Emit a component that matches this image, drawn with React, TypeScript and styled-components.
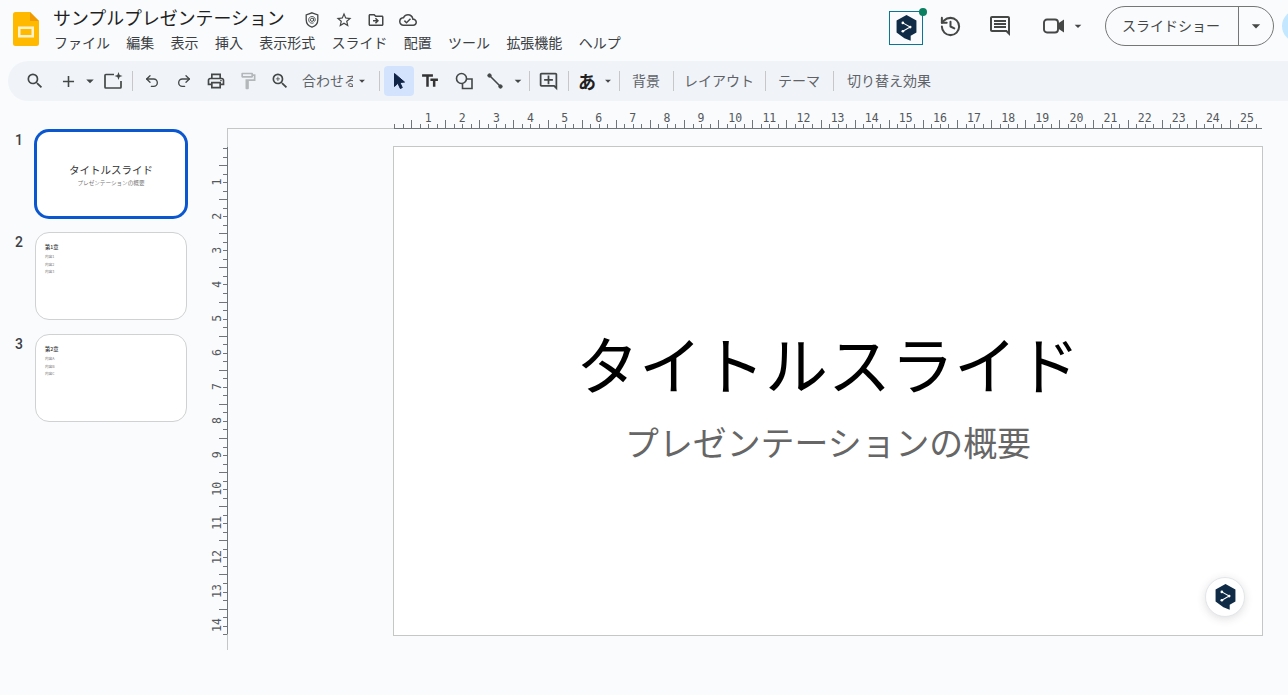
import React from "react";
import styled, { createGlobalStyle } from "styled-components";
import {
  MdOutlineStarBorder,
  MdOutlineComment,
  MdOutlineDriveFileMove,
  MdOutlineCloudDone,
  MdOutlineAddComment,
  MdOutlineTextFields,
  MdSearch,
  MdAdd,
  MdOutlinePrint,
  MdOutlineFormatPaint,
  MdOutlineZoomIn,
  MdArrowDropDown,
} from "react-icons/md";
import { Undo2, Redo2, History } from "lucide-react";

const JP = `"Noto Sans CJK JP", "Noto Sans", "Liberation Sans", sans-serif`;

const Global = createGlobalStyle`
  html, body { margin: 0; padding: 0; height: 100%; background: #f9fbfd; overflow: hidden; }
  body { font-family: ${JP}; }
  * { box-sizing: border-box; }
`;

const Page = styled.div`
  width: 1288px;
  height: 695px;
  overflow: hidden;
  background: #f9fbfd;
`;

const Header = styled.header`
  height: 61px;
  display: flex;
  justify-content: space-between;
  padding-left: 13px;
  overflow: hidden;
`;
const LeftGroup = styled.div`
  display: flex;
`;
const LogoWrap = styled.div`
  width: 26px;
  height: 34px;
  margin-top: 12px;
`;
const TitleBlock = styled.div`
  margin-left: 14px;
  padding-top: 5px;
`;
const TitleRow = styled.div`
  display: flex;
  align-items: center;
  height: 25px;
`;
const DocTitle = styled.div`
  font-size: 17.9px;
  line-height: 25px;
  color: #1f1f1f;
  width: 232px;
  white-space: nowrap;
`;
const TitleIcons = styled.div`
  display: flex;
  gap: 14px;
  margin-left: 18px;
  color: #444746;
  align-items: center;
  margin-top: 5px;
`;
const Menu = styled.nav`
  display: flex;
  gap: 16.3px;
  margin-top: 1px;
  margin-left: 1px;
  font-size: 14px;
  line-height: 22px;
  color: #3c4043;
  white-space: nowrap;
`;

const RightGroup = styled.div`
  display: flex;
  align-items: center;
  height: 52px;
  flex-shrink: 0;
  margin-right: -26px;
`;
const DeepLBox = styled.div`
  position: relative;
  width: 34px;
  height: 34px;
  margin-top: 4px;
  border: 1px solid #0b7596;
  display: flex;
  align-items: center;
  justify-content: center;
`;
const GreenDot = styled.span`
  position: absolute;
  right: -5px;
  top: -4px;
  width: 8px;
  height: 8px;
  border-radius: 50%;
  background: #0a8060;
`;
const HeadIcon = styled.div<{ $ml: number; $w?: number }>`
  margin-left: ${(p) => p.$ml}px;
  width: ${(p) => p.$w ?? 24}px;
  display: flex;
  align-items: center;
  justify-content: center;
  color: #444746;
`;
const SlideshowButton = styled.div`
  margin-left: 19px;
  width: 169px;
  height: 40px;
  border: 1px solid #747775;
  border-radius: 20px;
  display: flex;
  font-size: 14px;
  color: #444746;
`;
const SlideshowLabel = styled.div`
  width: 133px;
  border-right: 1px solid #747775;
  padding-left: 16px;
  line-height: 37px;
  white-space: nowrap;
`;
const SlideshowCaret = styled.div`
  flex: 1;
  display: flex;
  align-items: center;
  justify-content: center;
`;
const Avatar = styled.div`
  width: 32px;
  height: 32px;
  margin-left: 8px;
  border-radius: 50%;
  background: #c2e7ff;
`;

const Toolbar = styled.div`
  margin-left: 8px;
  height: 40px;
  padding-left: 12px;
  display: flex;
  align-items: center;
  background: #f0f4f9;
  border-radius: 20px 0 0 20px;
  color: #444746;
`;
const Tool = styled.div<{ $w?: number; $ml?: number; $active?: boolean }>`
  flex: none;
  width: ${(p) => p.$w ?? 30}px;
  height: 30px;
  margin-left: ${(p) => p.$ml ?? 0}px;
  display: flex;
  align-items: center;
  justify-content: center;
  border-radius: 4px;
  background: ${(p) => (p.$active ? "#d3e3fd" : "transparent")};
`;
const Sep = styled.div<{ $ml: number }>`
  flex: none;
  width: 1px;
  height: 20px;
  margin-left: ${(p) => p.$ml}px;
  background: #c7c7c7;
`;
const ToolText = styled.div<{ $ml: number; $w?: number }>`
  flex: none;
  margin-left: ${(p) => p.$ml}px;
  ${(p) => (p.$w ? `width: ${p.$w}px; overflow: hidden;` : "")}
  font-size: 14px;
  line-height: 20px;
  height: 22px;
  color: #5f6368;
  white-space: nowrap;
`;
const KanaTool = styled(Tool)`
  font-size: 18px;
  font-weight: 700;
  color: #1f1f1f;
`;

const Main = styled.main`
  display: grid;
  grid-template-columns: 212px 15px 1fr;
  grid-template-rows: 27px 522px;
`;
const Film = styled.aside`
  grid-column: 1;
  grid-row: 1 / 3;
  padding-top: 29px;
  display: flex;
  flex-direction: column;
  gap: 14px;
`;
const FilmItem = styled.div`
  display: flex;
`;
const FilmNum = styled.div`
  flex: none;
  width: 23px;
  text-align: right;
  font: 500 14px/20px Roboto, sans-serif;
  color: #3c4043;
`;
const Thumb = styled.div<{ $sel?: boolean; $center?: boolean }>`
  flex: none;
  width: 152px;
  height: 88px;
  margin-left: 12px;
  background: #fff;
  border-radius: 14px;
  border: ${(p) => (p.$sel ? "2px solid #0b57d0" : "1px solid #cfd1d2")};
  box-shadow: ${(p) => (p.$sel ? "0 0 0 1px #0b57d0" : "none")};
  display: flex;
  flex-direction: column;
  overflow: hidden;
  padding: ${(p) => (p.$center ? "31px 0 0" : "10px 0 0 9px")};
  align-items: ${(p) => (p.$center ? "center" : "flex-start")};
`;
const ThumbTitle = styled.div`
  font-size: 10.5px;
  line-height: 14px;
  color: #333;
  white-space: nowrap;
`;
const ThumbSub = styled.div`
  font-size: 5.6px;
  line-height: 9px;
  margin-top: 2px;
  color: #777;
  white-space: nowrap;
`;
const ThumbHead = styled.div`
  font-size: 5.2px;
  line-height: 7px;
  color: #333;
  font-weight: 500;
  margin-bottom: 3px;
`;
const ThumbLine = styled.div`
  font-size: 3.6px;
  line-height: 7.5px;
  color: #777;
`;

const HRulerSlot = styled.div`
  grid-column: 3;
  grid-row: 1;
  height: 18px;
  align-self: end;
  position: relative;
  z-index: 1;
`;
const VRulerSlot = styled.div`
  grid-column: 2;
  grid-row: 2;
  position: relative;
  z-index: 1;
`;
const RulerSvg = styled.svg`
  display: block;
  overflow: visible;
`;
const Canvas = styled.section`
  grid-column: 3;
  grid-row: 2;
  border-top: 1px solid #c4c7c5;
  border-left: 1px solid #c4c7c5;
  padding: 17px 0 0 165px;
  height: 522px;
  width: 1035px;
`;
const Slide = styled.div`
  position: relative;
  width: 870px;
  height: 490px;
  background: #fff;
  border: 1px solid #c4c7c5;
  display: flex;
  flex-direction: column;
  align-items: center;
  padding-top: 170px;
`;
const SlideTitle = styled.div`
  font-size: 63px;
  line-height: 90px;
  color: #000;
  white-space: nowrap;
`;
const SlideSub = styled.div`
  font-size: 33.9px;
  line-height: 48px;
  margin-top: 11px;
  color: #666;
  white-space: nowrap;
`;
const FloatBtn = styled.div`
  position: absolute;
  left: 811px;
  top: 430px;
  width: 40px;
  height: 40px;
  border-radius: 50%;
  background: #fff;
  border: 1px solid #e3e6ea;
  box-shadow: 0 2px 8px rgba(60, 64, 67, 0.16);
  display: flex;
  align-items: center;
  justify-content: center;
`;

const Logo = () => (
  <svg width="26" height="34" viewBox="0 0 26 34">
    <path d="M2.5 0H17L26 9v22.5A2.5 2.5 0 0 1 23.5 34h-21A2.5 2.5 0 0 1 0 31.5v-29A2.5 2.5 0 0 1 2.5 0z" fill="#ffba00" />
    <path d="M17 0l9 9h-9z" fill="#f29900" />
    <path d="M5 14.5h16v11H5zM7.5 17v6h11v-6z" fill="#fff3cf" fillRule="evenodd" />
  </svg>
);

const DeepL = ({ size }: { size: number }) => (
  <svg width={size} height={size * 1.14} viewBox="0 0 22 25">
    <path d="M11 0l9.5 5.3v11.4L15 19.8V24.500l-6-2.400-7.5-5.400V5.300z" fill="#0f2b46" />
    <path d="M7.500 7.500L14.500 11.500 7.500 15.500" fill="none" stroke="#fff" strokeWidth="1" />
    <circle cx="7.500" cy="7.500" r="1.300" fill="#fff" />
    <circle cx="14.500" cy="11.500" r="1.300" fill="#fff" />
    <circle cx="7.500" cy="15.500" r="1.300" fill="#fff" />
  </svg>
);

const ShieldAt = () => (
  <svg width="18" height="18" viewBox="0 0 18 18" fill="none" stroke="#444746">
    <path d="M9 1.800l5.800 2.200v4.700c0 3.600-2.400 6.400-5.800 7.500-3.400-1.100-5.800-3.900-5.800-7.500V4z" strokeWidth="1.300" />
    <circle cx="9" cy="8.800" r="1.600" strokeWidth="0.900" />
    <path d="M10.600 7.200v2.300c0 1.200 1.700 1.100 1.700-.7 0-2-1.500-3.300-3.300-3.300S5.700 6.800 5.700 8.800s1.500 3.400 3.300 3.400c.7 0 1.300-.2 1.700-.4" strokeWidth="0.900" />
  </svg>
);

const NewAiSlide = () => (
  <svg width="20" height="20" viewBox="0 0 20 20" fill="none">
    <path d="M11 3.500H2.800a.8.8 0 0 0-.8.800v11.900c0 .4.400.8.800.8h14.400c.4 0 .8-.4.800-.8V10" stroke="#444746" strokeWidth="1.700" />
    <path d="M15.500 1l1.100 2.900 2.900 1.100-2.900 1.100-1.100 2.900-1.100-2.900L11.500 5l2.900-1.100z" fill="#444746" />
  </svg>
);

const Cursor = () => (
  <svg width="18" height="20" viewBox="0 0 18 20">
    <path d="M4.500 2.500v13l3.400-3.200 2.400 5.200 2-.9-2.400-5.100 4.600-.4z" fill="#0f2447" stroke="#0f2447" strokeWidth="1" strokeLinejoin="round" />
  </svg>
);

const Shapes = () => (
  <svg width="20" height="20" viewBox="0 0 20 20" fill="none" stroke="#444746" strokeWidth="1.600">
    <circle cx="7.500" cy="7.500" r="5" />
    <path d="M13 8h5v9.500H8.500V13" />
  </svg>
);

const LineTool = () => (
  <svg width="20" height="20" viewBox="0 0 20 20" fill="none" stroke="#444746">
    <path d="M4.500 4.500l11 11" strokeWidth="1.600" />
    <circle cx="4.500" cy="4.500" r="1.700" fill="#444746" />
    <circle cx="15.500" cy="15.500" r="1.700" fill="#444746" />
  </svg>
);

const Camera = () => (
  <svg width="22" height="16" viewBox="0 0 22 16" fill="none">
    <rect x="1" y="1.500" width="14" height="13" rx="3" stroke="#444746" strokeWidth="1.900" />
    <path d="M15 5.500L21 1.500v13L15 10.500z" fill="#444746" />
  </svg>
);

const Caret = ({ size = 18 }: { size?: number }) => <MdArrowDropDown size={size} color="#444746" />;

const TICK = 8.53;
const tickLen = (i: number) => (i % 4 === 2 ? 8 : 4);

const HRuler = () => {
  const origin = 167;
  const n = 102;
  return (
    <RulerSvg width="1035" height="18">
      <line x1={origin} x2="1035" y1="18.500" y2="18.500" stroke="#70757a" />
      {Array.from({ length: n }, (_, i) => {
        const x = Math.round(origin + i * TICK) + 0.5;
        return <line key={i} x1={x} x2={x} y1={18 - tickLen(i)} y2={18} stroke="#70757a" />;
      })}
      {Array.from({ length: 25 }, (_, i) => (
        <text
          key={i}
          x={origin + 34.12 * (i + 1)}
          y="12"
          textAnchor="middle"
          fontFamily="'DejaVu Sans Mono', monospace"
          fontSize="11.500"
          fill="#54585c"
        >
          {i + 1}
        </text>
      ))}
    </RulerSvg>
  );
};

const VRuler = () => {
  const origin = 20;
  const n = 58;
  return (
    <RulerSvg width="15" height="522">
      <line x1="15.500" x2="15.500" y1={origin - 1} y2={origin + 57 * TICK} stroke="#70757a" />
      {Array.from({ length: n }, (_, i) => {
        const y = Math.round(origin + i * TICK) + 0.5;
        return <line key={i} x1={15 - tickLen(i)} x2={15} y1={y} y2={y} stroke="#70757a" />;
      })}
      {Array.from({ length: 14 }, (_, i) => {
        const y = origin + 34.08 * (i + 1);
        return (
          <text
            key={i}
            x="0"
            y="0"
            transform={`translate(9 ${y}) rotate(-90)`}
            textAnchor="middle"
            fontFamily="'DejaVu Sans Mono', monospace"
            fontSize="11.500"
            fill="#54585c"
          >
            {i + 1}
          </text>
        );
      })}
    </RulerSvg>
  );
};

const menus = ["ファイル", "編集", "表示", "挿入", "表示形式", "スライド", "配置", "ツール", "拡張機能", "ヘルプ"];

export default function App() {
  return (
    <Page>
      <Global />
      <Header>
        <LeftGroup>
          <LogoWrap>
            <Logo />
          </LogoWrap>
          <TitleBlock>
            <TitleRow>
              <DocTitle>サンプルプレゼンテーション</DocTitle>
              <TitleIcons>
                <ShieldAt />
                <MdOutlineStarBorder size={18} />
                <MdOutlineDriveFileMove size={18} />
                <MdOutlineCloudDone size={18} />
              </TitleIcons>
            </TitleRow>
            <Menu>
              {menus.map((m) => (
                <span key={m}>{m}</span>
              ))}
            </Menu>
          </TitleBlock>
        </LeftGroup>
        <RightGroup>
          <DeepLBox>
            <DeepL size={23} />
            <GreenDot />
          </DeepLBox>
          <HeadIcon $ml={15}>
            <History size={23} strokeWidth={2.1} />
          </HeadIcon>
          <HeadIcon $ml={26}>
            <MdOutlineComment size={24} />
          </HeadIcon>
          <HeadIcon $ml={30}>
            <Camera />
          </HeadIcon>
          <HeadIcon $ml={4} $w={16}>
            <Caret size={20} />
          </HeadIcon>
          <SlideshowButton>
            <SlideshowLabel>スライドショー</SlideshowLabel>
            <SlideshowCaret>
              <Caret size={20} />
            </SlideshowCaret>
          </SlideshowButton>
          <Avatar />
        </RightGroup>
      </Header>

      <Toolbar>
        <Tool><MdSearch size={20} /></Tool>
        <Tool $w={24} $ml={6}><MdAdd size={19} /></Tool>
        <Tool $w={18} $ml={1}><Caret size={20} /></Tool>
        <Tool $w={26} $ml={1}><NewAiSlide /></Tool>
        <Sep $ml={6} />
        <Tool $ml={4}><Undo2 size={16} strokeWidth={2} /></Tool>
        <Tool $ml={2}><Redo2 size={16} strokeWidth={2} /></Tool>
        <Tool $ml={2}><MdOutlinePrint size={20} /></Tool>
        <Tool $ml={2}><MdOutlineFormatPaint size={20} color="#b4b7ba" /></Tool>
        <Tool $ml={2}><MdOutlineZoomIn size={20} /></Tool>
        <ToolText $ml={7} $w={51}>合わせる</ToolText>
        <Tool $w={14} $ml={2}><Caret size={20} /></Tool>
        <Sep $ml={10} />
        <Tool $ml={4} $active><Cursor /></Tool>
        <Tool $ml={1}><MdOutlineTextFields size={20} color="#333" /></Tool>
        <Tool $ml={4}><Shapes /></Tool>
        <Tool $ml={1}><LineTool /></Tool>
        <Tool $w={16}><Caret size={20} /></Tool>
        <Sep $ml={3} />
        <Tool $ml={3}><MdOutlineAddComment size={21} /></Tool>
        <Sep $ml={5} />
        <KanaTool $ml={3}>あ</KanaTool>
        <Tool $w={14} $ml={-1}><Caret size={20} /></Tool>
        <Sep $ml={4} />
        <ToolText $ml={12}>背景</ToolText>
        <Sep $ml={13} />
        <ToolText $ml={10}>レイアウト</ToolText>
        <Sep $ml={11} />
        <ToolText $ml={12}>テーマ</ToolText>
        <Sep $ml={13} />
        <ToolText $ml={13}>切り替え効果</ToolText>
      </Toolbar>

      <Main>
        <Film>
          <FilmItem>
            <FilmNum>1</FilmNum>
            <Thumb $sel $center>
              <ThumbTitle>タイトルスライド</ThumbTitle>
              <ThumbSub>プレゼンテーションの概要</ThumbSub>
            </Thumb>
          </FilmItem>
          <FilmItem>
            <FilmNum>2</FilmNum>
            <Thumb>
              <ThumbHead>第1章</ThumbHead>
              <ThumbLine>内容1</ThumbLine>
              <ThumbLine>内容2</ThumbLine>
              <ThumbLine>内容3</ThumbLine>
            </Thumb>
          </FilmItem>
          <FilmItem>
            <FilmNum>3</FilmNum>
            <Thumb>
              <ThumbHead>第2章</ThumbHead>
              <ThumbLine>内容A</ThumbLine>
              <ThumbLine>内容B</ThumbLine>
              <ThumbLine>内容C</ThumbLine>
            </Thumb>
          </FilmItem>
        </Film>
        <HRulerSlot>
          <HRuler />
        </HRulerSlot>
        <VRulerSlot>
          <VRuler />
        </VRulerSlot>
        <Canvas>
          <Slide>
            <SlideTitle>タイトルスライド</SlideTitle>
            <SlideSub>プレゼンテーションの概要</SlideSub>
            <FloatBtn>
              <DeepL size={23} />
            </FloatBtn>
          </Slide>
        </Canvas>
      </Main>
    </Page>
  );
}
